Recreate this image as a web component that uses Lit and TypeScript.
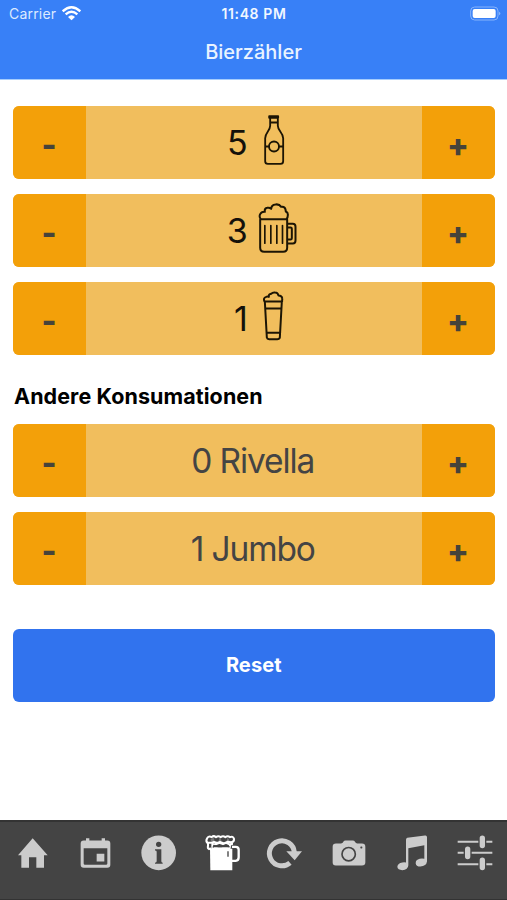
import { LitElement, html, svg, css } from "lit";
import { customElement, property, state } from "lit/decorators.js";

const drinks = {
  bottle: svg`<g fill="none" stroke="#1c1504" stroke-width="5.500" stroke-linejoin="round" stroke-linecap="round">
    <path d="M161 32H188V37H161ZM164 38V61C164 76 149 82 149 98V167Q149 175 157 175H195Q203 175 203 167V98C203 82 187 76 187 61V38M164 51H187M149 123H160M191 123H203"/>
    <circle cx="175.500" cy="123" r="15"/></g>`,
  mug: svg`<g fill="none" stroke="#1c1504" stroke-width="6" stroke-linejoin="round" stroke-linecap="round">
    <path d="M134 79V163Q134 175 146 175H203Q215 175 215 163V79M134 77H215M136 77Q130 70 134 62Q138 54 148 55Q146 45 155 43Q162 41 167 46Q168 34 180 33Q191 31 197 40Q208 38 210 48L211 54Q218 57 217 65Q217 72 213 77ZM216 91H232Q240 91 240 100V141Q240 150 232 150H216M216 102H225Q229 102 229 106V134Q229 138 225 138H216"/>
    <path stroke-width="5" d="M148 96V149M166 96V149M184 96V149M201 96V149"/></g>`,
  glass: svg`<g fill="none" stroke="#1c1504" stroke-width="6" stroke-linejoin="round" stroke-linecap="round">
    <path d="M148 60L154 168Q155 173 161 173H185Q192 173 193 168L199 60M147 60H200M150 81H197M153 154H194M147 60Q142 49 152 46Q156 44 160 46Q159 38 167 37Q171 32 179 33Q187 33 189 42Q199 42 200 50Q201 55 199 60"/></g>`,
};

const tabs = [
  { label: "Home", box: "35 52.5 120 120", art: svg`<path d="M97 68L142 119H131V157H108V125H86V157H63V119H53Z"/>` },
  { label: "Kalender", box: "225 52.5 120 120", art: svg`<path fill-rule="evenodd" d="M258 68H268V75H305V68H315V75H322Q331 75 331 84V148Q331 157 322 157H251Q242 157 242 148V84Q242 75 251 75H258ZM251 98V144Q251 148 255 148H318Q322 148 322 144V98ZM290 115H313V138H290Z"/>` },
  { label: "Info", box: "25 52.5 120 120", art: svg`<circle cx="87" cy="112" r="52"/><path fill="#444" d="M79 86.500a8 8 0 1 0 16 0a8 8 0 1 0-16 0M76 101H95V137Q95 141 99 142V145H76V142Q81 141 81 137V109Q81 105 76 105Z"/>` },
  { label: "Bier", box: "215 52.5 120 120", active: true, art: svg`<path d="M239 100H306V164H240Z"/><path fill="none" stroke="#fff" stroke-width="6" stroke-linecap="round" stroke-linejoin="round" d="M240 99L236 101Q231 99 233 91V84Q225 78 230 69Q235 60 244 65Q250 59 257 65Q264 60 271 65Q278 60 285 65Q292 60 299 65Q308 61 311 70Q312 77 305 80V86H296L287 82L278 86L267 82L258 86H246V98H298L299 89M233 82H244L251 79L261 82L269 79L281 84L291 79L303 80"/><path fill="none" stroke="#fff" stroke-width="7" d="M305 94H316Q325 94 325 103V125Q325 135 316 136H305"/><path fill="none" stroke="#444" stroke-width="4" d="M248 96L251 90L264 93H273L285 91L298 94M293 107V124"/><path fill="#fff" d="M249 66L253 75L245 80L240 73ZM268 67L274 75L264 79ZM292 67L298 75L288 79Z" opacity=".3"/>` },
  { label: "Aktualisieren", box: "31 52.5 120 120", art: svg`<path fill="none" stroke="#ccc" stroke-width="15" d="M106 142A37.500 37.500 0 1 1 119 110"/><path d="M95 107H142L120 134Z"/>` },
  { label: "Kamera", box: "221 52.5 120 120", art: svg`<path d="M242 84H257Q262 84 264 79Q266 75 271 75H292Q297 75 299 79Q301 84 306 84H320Q330 84 330 94V141Q330 150 320 150H241Q232 150 232 141V93Q232 84 242 84Z"/><circle cx="280" cy="116" r="20" fill="none" stroke="#444" stroke-width="5"/><rect x="315" y="93" width="6" height="6" rx="2" fill="#444"/>` },
  { label: "Musik", box: "36 52.5 120 120", art: svg`<path fill-rule="evenodd" d="M82 67Q78 68 78 73V141Q73 140 67 141Q53 143 52 154Q53 164 67 164Q84 163 85 149V98L133 89V130Q126 128 119 130Q107 133 107 143Q108 153 121 153Q139 152 141 138V65Q141 59 135 60Z"/>` },
  { label: "Einstellungen", box: "226 52.5 120 120", art: svg`<path fill="none" stroke="#ccc" stroke-width="6" d="M234 79H296M320 79H338M234 112H252M276 112H338M234 146H296M320 146H338"/><path fill="none" stroke="#ccc" stroke-width="16" stroke-linecap="round" d="M308 68V90M264 101V123M308 134V156"/>` },
];

@customElement("counter-row")
class CounterRow extends LitElement {
  @property({ type: Number }) count = 0;
  @property() kind = "";
  @property() label = "";

  static styles = css`
    :host { display: flex; height: 73px; border-radius: 6px; overflow: hidden; background: #f1be5d; color: #444; }
    button { width: 73px; border: 0; padding: 5px 0 0; background: #f3a009; color: #46433a; font: 800 32px Inter, sans-serif; }
    .minus { padding-top: 3px; padding-right: 1px; }
    .value { flex: 1; display: flex; align-items: center; justify-content: center; }
    .drink { padding: 0 0 6px 18px; }
    .number { width: 22px; display: flex; justify-content: flex-end; padding: 7px 1px 0 0; margin-left: -1px; color: #15110a; font-size: 34px; line-height: 40px; }
    .label { font-size: 33.5px; letter-spacing: -1.1px; padding: 1px 2px 0 0; }
    svg { width: 50px; height: 50px; display: block; }
  `;

  private change(step: number) {
    this.dispatchEvent(new CustomEvent("change-count", { detail: step }));
  }

  render() {
    return html`
      <button class="minus" @click=${() => this.change(-1)}>-</button>
      ${this.kind
        ? html`<div class="value drink"><span class="number">${this.count}</span>
            <svg viewBox="100.5 28.5 150 150">${drinks[this.kind as keyof typeof drinks]}</svg></div>`
        : html`<div class="value label">${this.count} ${this.label}</div>`}
      <button @click=${() => this.change(1)}>+</button>
    `;
  }
}

@customElement("app-root")
class AppRoot extends LitElement {
  @state() counts = [5, 3, 1, 0, 1];

  static styles = css`
    :host { display: flex; flex-direction: column; height: 900px; background: #fff; font-family: Inter, sans-serif; color: #000; }
    header { height: 79px; background: #3880f7; color: #fff; border-bottom: 1px solid #a6cdfd; }
    .status { display: grid; grid-template-columns: 1fr auto 1fr; align-items: center; height: 27px; padding: 0 6px 0 9px; font-size: 14px; }
    .carrier { display: flex; align-items: center; gap: 6px; color: #dceaff; font-size: 14px; letter-spacing: 0.2px; }
    .time { font-weight: 600; letter-spacing: 0.6px; padding-right: 2px; color: #f1f7ff; }
    .battery { justify-self: end; }
    svg { display: block; }
    .title { margin: 0; text-align: center; font-size: 20px; font-weight: 500; line-height: 51px; color: #e9f3ff; }
    main { flex: 1; padding: 26px 12.5px 0 13px; }
    .rows { display: grid; gap: 15px; }
    h2 { margin: 27px 0 13px 1px; font-size: 21.500px; line-height: 29px; font-weight: 700; letter-spacing: 0.08px; }
    .reset { display: block; width: 100%; height: 73px; margin-top: 44px; padding: 0 0 2px; border: 0; border-radius: 6px; background: #3173ee; color: #fff; font: 700 20px Inter, sans-serif; letter-spacing: 0.1px; }
    nav { height: 80px; box-sizing: border-box; border-top: 2px solid #333; border-bottom: 1px solid #333; background: #444; display: grid; grid-template-columns: repeat(8, 1fr); justify-items: center; align-items: start; padding-top: 10.500px; }
    .tab { width: 40px; height: 40px; fill: #ccc; }
    .active { fill: #fff; }
  `;

  private row(i: number, kind: string, label = "") {
    return html`<counter-row .count=${this.counts[i]} .kind=${kind} .label=${label}
      @change-count=${(e: CustomEvent) => {
        this.counts = this.counts.map((c, n) => (n === i ? Math.max(0, c + e.detail) : c));
      }}></counter-row>`;
  }

  render() {
    return html`
      <header>
        <div class="status">
          <div class="carrier">Carrier
            <svg width="19" height="15" viewBox="0 0 57 45" fill="none" stroke="#fff" stroke-width="7">
              <path d="M2 16Q28.500-8 55 16M11 25Q28.500 9 46 25"/><path fill="#fff" stroke="none" d="M18 33Q28.500 23 39 33L28.500 43Z"/>
            </svg>
          </div>
          <div class="time">11:48 PM</div>
          <svg class="battery" width="31" height="15" viewBox="0 0 93 45">
            <rect x="2" y="3" width="82" height="39" rx="12" fill="none" stroke="#86b3fc" stroke-width="3"/>
            <rect x="8" y="9" width="69" height="27" rx="6" fill="#fff"/><path d="M87 17Q95 22 87 28Z" fill="#86b3fc"/>
          </svg>
        </div>
        <h1 class="title">Bierzähler</h1>
      </header>
      <main>
        <div class="rows">${this.row(0, "bottle")}${this.row(1, "mug")}${this.row(2, "glass")}</div>
        <h2>Andere Konsumationen</h2>
        <div class="rows">${this.row(3, "", "Rivella")}${this.row(4, "", "Jumbo")}</div>
        <button class="reset" @click=${() => (this.counts = [0, 0, 0, 0, 0])}>Reset</button>
      </main>
      <nav>
        ${tabs.map((t) => html`<svg class="tab ${t.active ? "active" : ""}" viewBox=${t.box} role="img" aria-label=${t.label}>${t.art}</svg>`)}
      </nav>
    `;
  }
}
